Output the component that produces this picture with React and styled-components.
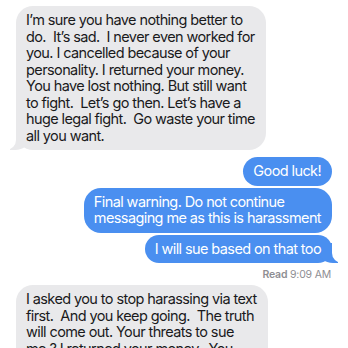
import React from "react";
import styled, { createGlobalStyle } from "styled-components";

const Global = createGlobalStyle`
  html, body {
    margin: 0;
    padding: 0;
    background: #ffffff;
  }
  body {
    font-family: "Inter", "Liberation Sans", sans-serif;
    -webkit-font-smoothing: antialiased;
  }
`;

const Thread = styled.div`
  width: 348px;
  height: 348px;
  overflow: hidden;
  box-sizing: border-box;
  padding: 6px 16px 0 16px;
  display: flex;
  flex-direction: column;
`;

const Group = styled.div`
  display: flex;
  flex-direction: column;
  align-items: ${(p) => (p.$mine ? "flex-end" : "flex-start")};
  gap: 2px;
  margin-top: ${(p) => p.$top || 0}px;
`;

const Bubble = styled.div`
  position: relative;
  box-sizing: border-box;
  padding: 6px 11px 6px 10px;
  border-radius: 17px;
  font-size: 14.5px;
  line-height: 16.5px;
  letter-spacing: -0.6px;
  white-space: pre;
  color: ${(p) => (p.$mine ? "#ffffff" : "#1a1a1c")};
  background: ${(p) => (p.$mine ? "#4a8ff0" : "#e9e9eb")};

  ${(p) =>
    p.$tail &&
    (p.$mine
      ? `
    &::before {
      content: "";
      position: absolute;
      bottom: 0;
      right: -6px;
      width: 20px;
      height: 20px;
      background: #4a8ff0;
      border-bottom-left-radius: 15px 13px;
    }
    &::after {
      content: "";
      position: absolute;
      bottom: 0;
      right: -20px;
      width: 20px;
      height: 20px;
      background: #ffffff;
      border-bottom-left-radius: 10px;
    }
  `
      : `
    &::before {
      content: "";
      position: absolute;
      bottom: 0;
      left: -6px;
      width: 20px;
      height: 20px;
      background: #e9e9eb;
      border-bottom-right-radius: 15px 13px;
    }
    &::after {
      content: "";
      position: absolute;
      bottom: 0;
      left: -20px;
      width: 20px;
      height: 20px;
      background: #ffffff;
      border-bottom-right-radius: 10px;
    }
  `)}
`;

const Text = styled.span`
  position: relative;
  z-index: 1;
`;

const Receipt = styled.div`
  align-self: flex-end;
  margin-top: 6px;
  margin-right: 1px;
  font-size: 10.5px;
  line-height: 12px;
  letter-spacing: -0.2px;
  color: #8e8e93;
  b {
    font-weight: 600;
  }
`;

const messages = [
  {
    mine: false,
    top: 0,
    items: [
      "I\u2019m sure you have nothing better to\ndo.  It\u2019s sad.  I never even worked for\nyou. I cancelled because of your\npersonality. I returned your money.\nYou have lost nothing. But still want\nto fight.  Let\u2019s go then. Let\u2019s have a\nhuge legal fight.  Go waste your time\nall you want.",
    ],
  },
  {
    mine: true,
    top: 7,
    items: [
      "Good luck!",
      "Final warning. Do not continue\nmessaging me as this is harassment",
      "I will sue based on that too",
    ],
  },
];

const last = {
  mine: false,
  items: [
    "I asked you to stop harassing via text\nfirst.  And you keep going.  The truth\nwill come out. Your threats to sue\nme ? I returned your money.  You\nhave nothing to lose. Why bother?",
  ],
};

export default function App() {
  return (
    <>
      <Global />
      <Thread>
        {messages.map((g, gi) => (
          <Group key={gi} $mine={g.mine} $top={g.top}>
            {g.items.map((t, i) => (
              <Bubble key={i} $mine={g.mine} $tail={i === g.items.length - 1}>
                <Text>{t}</Text>
              </Bubble>
            ))}
          </Group>
        ))}
        <Receipt>
          <b>Read</b> 9:09 AM
        </Receipt>
        <Group $mine={false} $top={4}>
          {last.items.map((t, i) => (
            <Bubble key={i} $tail>
              <Text>{t}</Text>
            </Bubble>
          ))}
        </Group>
      </Thread>
    </>
  );
}
